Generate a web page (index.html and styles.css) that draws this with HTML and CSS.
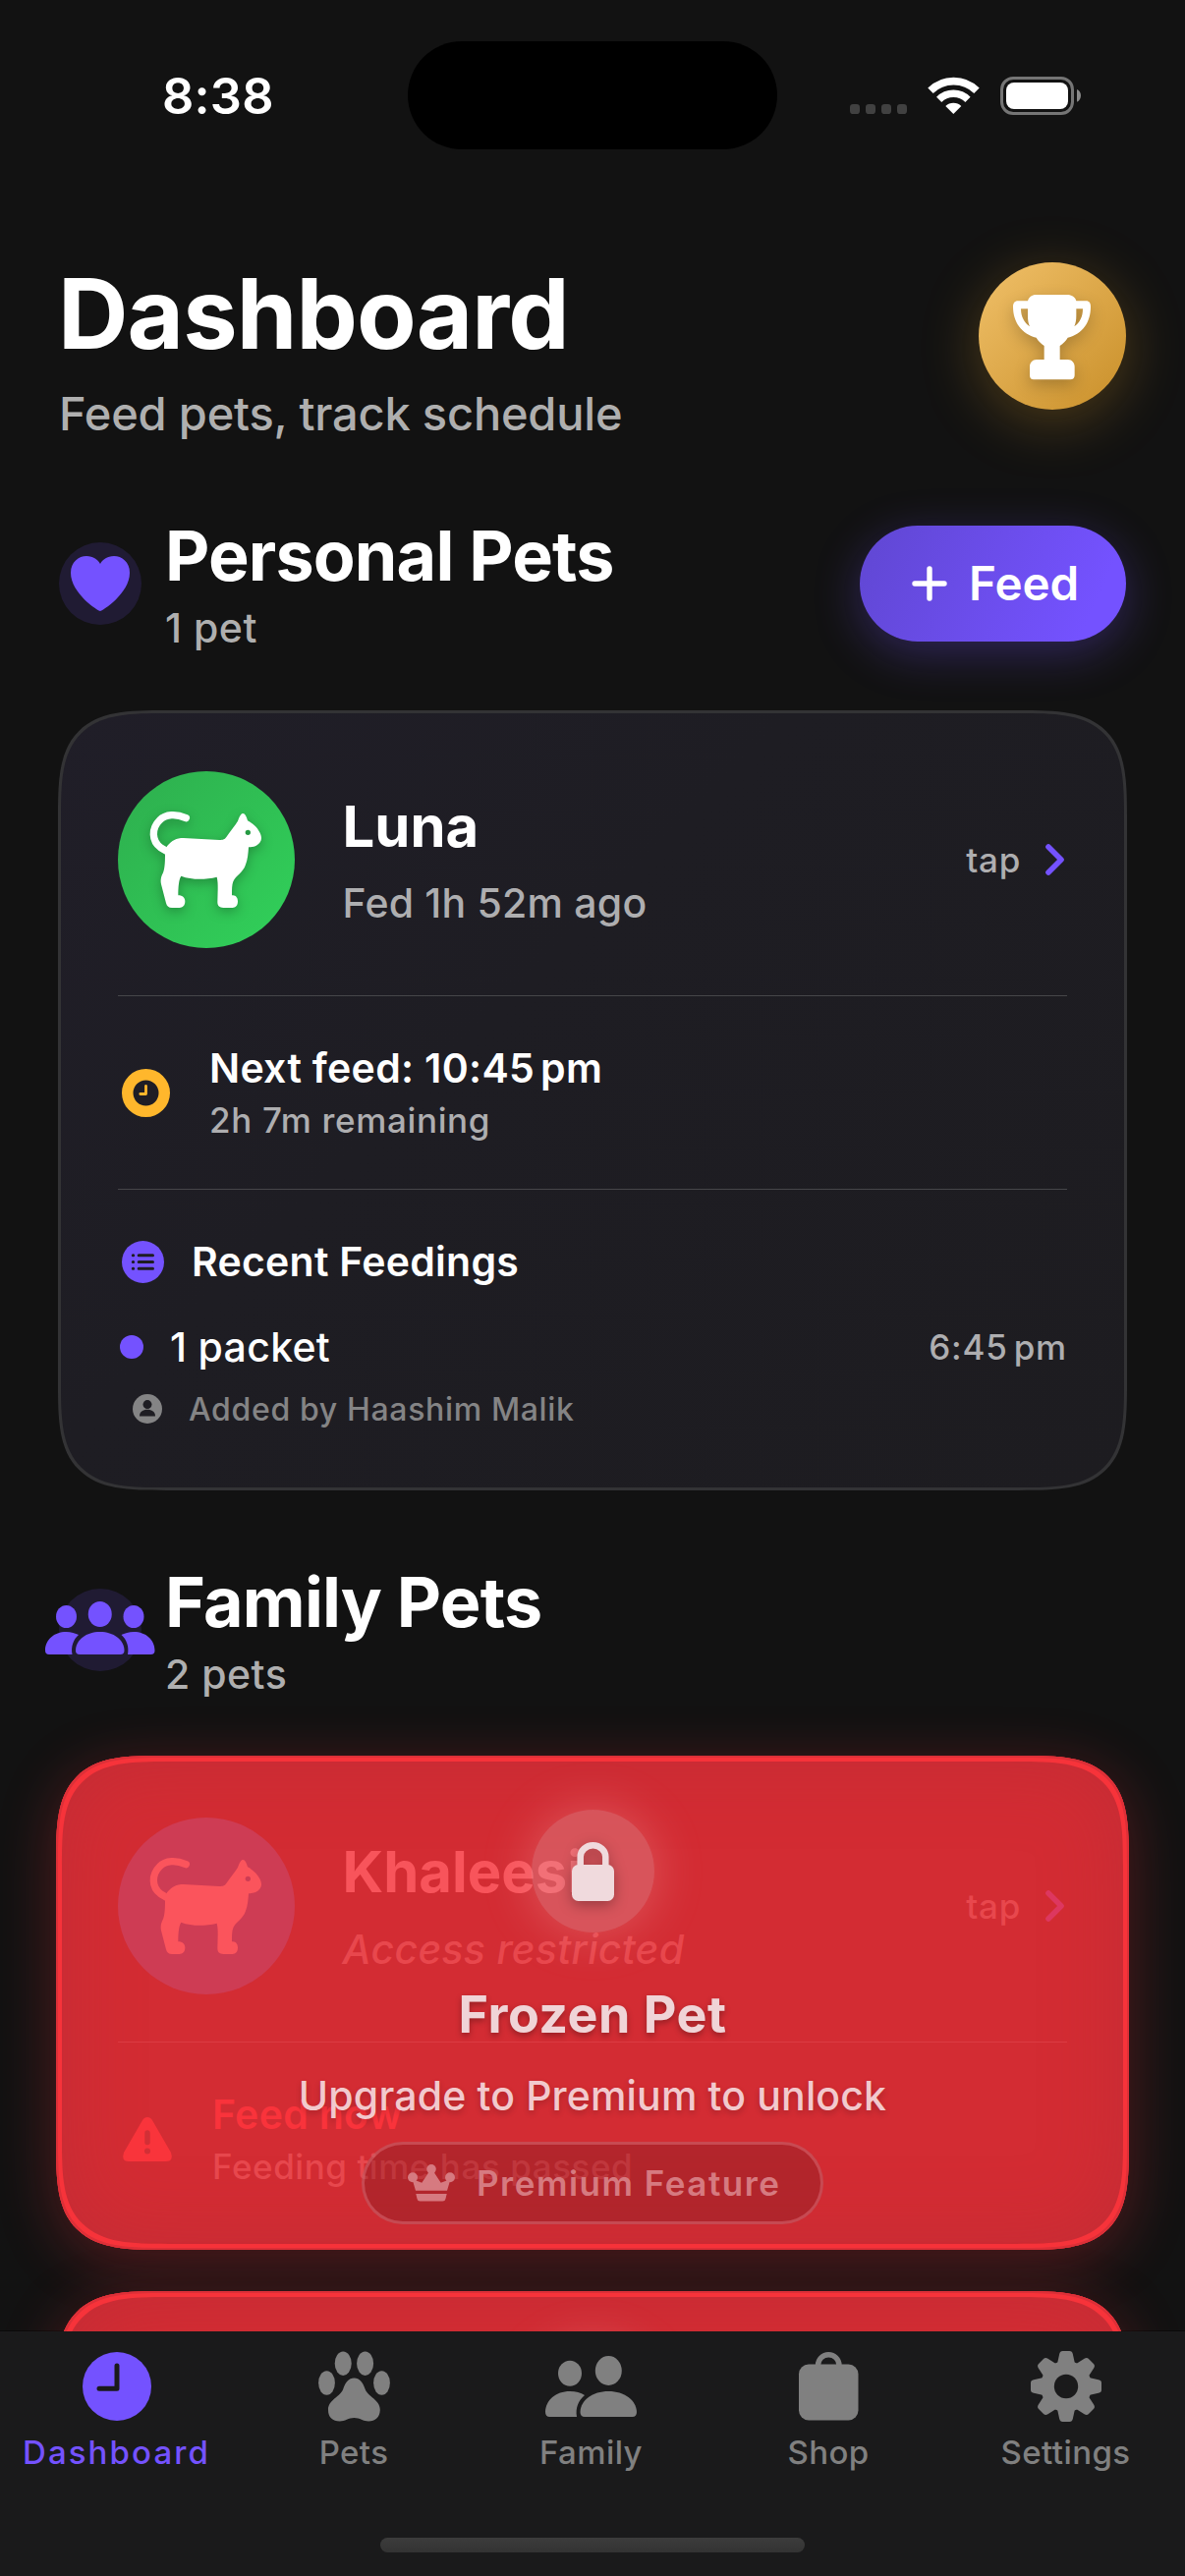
FILE: index.html
```html
<!DOCTYPE html>
<html lang="en">
<head>
<meta charset="utf-8">
<title>Dashboard</title>
<link rel="stylesheet" href="styles.css">
</head>
<body>
<svg class="defs" width="0" height="0" aria-hidden="true">
  <symbol id="cat" viewBox="-60 -75 540 540">
    <path d="M148 68C118 55 86 55 67 75C42 100 43 138 70 158L94 172" fill="none" stroke="currentColor" stroke-width="22" stroke-linecap="round"/>
    <path fill="currentColor" fill-rule="evenodd" d="M90 154C105 136 118 129 140 129L250 135C262 135 266 133 271 126C285 105 298 90 306 77C312 62 316 54 322 54C328 54 333 64 336 76C350 83 366 97 373 112C379 124 380 133 374 142C366 153 355 157 339 157C338 175 336 195 330 210C322 235 300 243 292 262C288 272 288 285 288 304C300 302 306 312 306 322C306 336 299 342 290 342L262 342C250 342 244 336 244 325L245 285C245 270 245 260 242 248C205 257 165 257 133 245C126 255 124 280 124 304C138 304 145 312 145 322C145 336 137 342 128 342L105 342C95 342 90 338 87 328L72 270C69 255 73 245 78 235C84 218 84 200 84 168ZM345 112A8 8 0 1 0 329 112A8 8 0 1 0 345 112Z"/>
  </symbol>
  <symbol id="chevron" viewBox="0 0 20 32">
    <path d="M3 3L16 16L3 29" fill="none" stroke="currentColor" stroke-width="5.6" stroke-linecap="round" stroke-linejoin="round"/>
  </symbol>
</svg>

<div class="phone">
  <header class="status">
    <span class="status-time">8:38</span>
    <span class="island"></span>
    <svg class="status-icons" viewBox="0 0 810 228">
      <g fill="#414141">
        <rect x="45" y="138" width="30" height="30" rx="10"/><rect x="93" y="138" width="30" height="30" rx="10"/>
        <rect x="141" y="138" width="30" height="30" rx="10"/><rect x="189" y="138" width="30" height="30" rx="10"/>
      </g>
      <g fill="none" stroke="#fff">
        <path d="M291 97A100 100 0 0 1 432 97" stroke-width="23"/>
        <path d="M317 124A62 62 0 0 1 405 124" stroke-width="22"/>
      </g>
      <path d="M361 168L337 144A35 35 0 0 1 385 144Z" fill="#fff"/>
      <rect x="508.500" y="58.500" width="216" height="108" rx="35" fill="none" stroke="#757575" stroke-width="9"/>
      <rect x="522" y="72" width="189" height="81" rx="24" fill="#fff"/>
      <path d="M738 93C754 99 754 125 738 131Z" fill="#8a8a8a"/>
    </svg>
  </header>

  <main class="content">
    <section class="page-head">
      <div class="page-titles">
        <h1>Dashboard</h1>
        <p class="page-sub">Feed pets, track schedule</p>
      </div>
      <div class="trophy">
        <svg viewBox="18 21 450 450"><path fill="#fff" fill-rule="evenodd" d="M194 120H288C302 120 314 128 316 139H346C356 139 360 146 360 156C360 205 335 240 290 251C284 262 276 268 266 276V318H290C303 318 311 328 311 340V366C311 374 306 379 298 379H186C178 379 174 374 174 366V340C174 328 182 318 195 318H218V276C208 268 200 262 194 251C150 240 123 205 123 156C123 146 128 139 138 139H168C171 128 180 120 194 120ZM147 163H168V185C168 197 170 208 174 217C157 205 147 188 147 163ZM316 163H336C336 188 327 205 310 217C314 208 316 197 316 185Z"/></svg>
      </div>
    </section>

    <section class="group-head personal">
      <span class="group-icon"><svg class="heart" viewBox="0 0 60 56"><path fill="currentColor" d="M30 56C28 56 0 38 0 17C0 6 8 0 16 0C23 0 28 4 30 8C32 4 37 0 44 0C52 0 60 6 60 17C60 38 32 56 30 56Z"/></svg></span>
      <div class="group-titles">
        <h2>Personal Pets</h2>
        <p>1 pet</p>
      </div>
      <div class="feed-btn">
        <svg viewBox="0 0 36 36"><path d="M18 3V33M3 18H33" fill="none" stroke="#fff" stroke-width="5.400" stroke-linecap="round"/></svg>
        <span>Feed</span>
      </div>
    </section>

    <article class="card pet-card">
      <div class="pet-head">
        <span class="avatar"><svg><use href="#cat"/></svg></span>
        <div class="pet-names"><h3>Luna</h3><p>Fed 1h 52m ago</p></div>
        <span class="tap">tap</span><svg class="chev"><use href="#chevron"/></svg>
      </div>
      <div class="next">
        <svg class="next-icon" viewBox="0 0 49 49"><path fill="#ffb72c" fill-rule="evenodd" d="M0 24.500A24.500 24.500 0 1 0 49 24.500A24.500 24.500 0 1 0 0 24.500ZM11.500 24.500A13 13 0 1 1 37.500 24.500A13 13 0 1 1 11.500 24.500Z"/><path d="M24.500 17.500V25.500H18.800" fill="none" stroke="#ffb72c" stroke-width="2.800" stroke-linecap="round" stroke-linejoin="round"/></svg>
        <div><p class="t-next">Next feed: 10:45<span class="thin"></span>pm</p><p class="t-remain">2h 7m remaining</p></div>
      </div>
      <div class="recent">
        <div class="recent-title">
          <svg viewBox="0 0 43 43"><circle cx="21.500" cy="21.500" r="21.500" fill="#7452ff"/><g stroke="#1e1d23" stroke-width="3" stroke-linecap="round"><path d="M11.300 14.800h.4M11.300 21.500h.4M11.300 28.200h.4M17.200 14.800H31.500M17.200 21.500H31.500M17.200 28.200H31.500"/></g></svg>
          <span>Recent Feedings</span>
        </div>
        <div class="entry"><span class="dot"></span><span>1 packet</span><span class="t-time">6:45<span class="thin"></span>pm</span></div>
        <div class="added">
          <svg viewBox="0 0 30 30"><circle cx="15" cy="15" r="15" fill="#848485"/><g fill="#1e1d23"><circle cx="15" cy="10.600" r="4.500"/><path d="M7 22.500C7 18 10.500 15.800 15 15.800S23 18 23 22.500Z"/></g></svg>
          <span>Added by Haashim Malik</span>
        </div>
      </div>
    </article>

    <section class="group-head family">
      <span class="group-icon"><svg class="people" viewBox="0 0 111.500 54"><g fill="currentColor"><ellipse cx="55.750" cy="13" rx="12" ry="13"/><ellipse cx="21.500" cy="15.500" rx="10.500" ry="11.500"/><ellipse cx="90" cy="15.500" rx="10.500" ry="11.500"/><path d="M35 54Q31 54 31 50C31 39 42 31 55.750 31C69.500 31 80.500 39 80.500 50Q80.500 54 76.500 54Z"/><path d="M4 54Q0 54 0 50C0 39 9 31 21.500 31C26 31 31 32.500 34 34C28.500 39 26 46 27.500 54Z"/><path d="M107.500 54Q111.500 54 111.500 50C111.500 39 102.500 31 90 31C85.500 31 80.500 32.500 77.500 34C83 39 85.500 46 84 54Z"/></g></svg></span>
      <div class="group-titles">
        <h2>Family Pets</h2>
        <p>2 pets</p>
      </div>
    </section>

    <article class="card frozen-card">
      <div class="pet-head">
        <span class="avatar"><svg><use href="#cat"/></svg></span>
        <div class="pet-names"><h3>Khaleesi</h3><p class="t-access">Access restricted</p></div>
        <span class="tap">tap</span><svg class="chev"><use href="#chevron"/></svg>
      </div>
      <div class="next">
        <svg class="warn" viewBox="0 0 50 45"><path fill="#f9343b" d="M25 0Q28.500 0 30.500 4L49 36Q52 45 44 45H6Q-2 45 1 36L19.500 4Q21.500 0 25 0Z"/><path d="M25 16V25.500" stroke="#d22f36" stroke-width="5.400" stroke-linecap="round"/><circle cx="25" cy="34.500" r="3" fill="#d22f36"/></svg>
        <div><p class="t-now">Feed now</p><p class="t-passed">Feeding time has passed</p></div>
      </div>
      <div class="freeze">
        <span class="lock"><svg viewBox="0 0 43 60"><path d="M8.700 28V15A12.800 11.700 0 0 1 34.300 15V28" fill="none" stroke="currentColor" stroke-width="6.500"/><rect y="23" width="43" height="37" rx="6.500" fill="currentColor"/></svg></span>
        <h3>Frozen Pet</h3>
        <p>Upgrade to Premium to unlock</p>
        <div class="pill">
          <svg viewBox="0 0 48 38"><g fill="currentColor"><circle cx="24" cy="4.800" r="4.800"/><circle cx="5" cy="13.200" r="5"/><circle cx="43" cy="13.200" r="5"/><path d="M4.500 15L14.300 18.800L22 7H26L33.700 18.800L43.500 15L40 26.800H8Z"/><path d="M8.300 30H39.700L38.500 35Q38 37.600 35.500 37.600H12.500Q10 37.600 9.500 35Z"/></g></svg>
          <span>Premium Feature</span>
        </div>
      </div>
    </article>

    <article class="card frozen-card next-card"><span class="lock-glow"></span></article>
  </main>

  <nav class="tabbar">
    <div class="tabs">
      <div class="tab active"><svg viewBox="0 0 70 70" width="70"><circle cx="35" cy="35" r="35" fill="currentColor"/><path d="M35 14V37.300H17" fill="none" stroke="#1a1a1b" stroke-width="5" stroke-linecap="round" stroke-linejoin="round"/></svg><span>Dashboard</span></div>
      <div class="tab"><svg viewBox="0 0 73 71" width="73"><g fill="currentColor"><ellipse cx="25.200" cy="12.200" rx="8.500" ry="12.200"/><ellipse cx="47.600" cy="12.200" rx="8.500" ry="12.200"/><ellipse cx="8.500" cy="32" rx="8.400" ry="12.200"/><ellipse cx="64.500" cy="32" rx="8.400" ry="12.200"/><path d="M36.400 27C42 27 45 31 47.500 38C50 46 63 49 62.800 59.500C62.500 67 58 71 51 71C46 71 42 67.500 36.400 67.500C30.800 67.500 27 71 21.800 71C14.500 71 10 67 10 59.500C9.800 49 22.800 46 25.300 38C27.800 31 30.800 27 36.400 27Z"/></g></svg><span>Pets</span></div>
      <div class="tab"><svg viewBox="0 0 93 62" width="93"><g fill="currentColor"><ellipse cx="25" cy="17.700" rx="12" ry="13"/><ellipse cx="64.300" cy="15" rx="13.500" ry="15"/><path d="M40 62Q35.500 62 35.500 57C36 45 48 36 64.300 36C80.500 36 92.500 45 93 57Q93 62 88.500 62Z"/><path d="M4.500 62Q0 62 0 57C.5 45 10.500 36 25 36C31 36 36 37.500 40 40C33.500 45.500 30.500 53 32 62Z"/></g></svg><span>Family</span></div>
      <div class="tab"><svg viewBox="0 0 61 70" width="61"><rect y="12.500" width="60.500" height="57" rx="10" fill="currentColor"/><path d="M19.500 16V13.500A10.700 10.700 0 0 1 41 13.500V16" fill="none" stroke="currentColor" stroke-width="5.400"/></svg><span>Shop</span></div>
      <div class="tab"><svg viewBox="-36 -36 72 72" width="72"><g fill="currentColor"><circle r="26"/><path id="tooth" d="M-9-23L-6.800-33Q-6.200-36-3.500-36H3.500Q6.200-36 6.800-33L9-23Z"/><use href="#tooth" transform="rotate(45)"/><use href="#tooth" transform="rotate(90)"/><use href="#tooth" transform="rotate(135)"/><use href="#tooth" transform="rotate(180)"/><use href="#tooth" transform="rotate(225)"/><use href="#tooth" transform="rotate(270)"/><use href="#tooth" transform="rotate(315)"/></g><circle r="12.200" fill="#1a1a1b"/></svg><span>Settings</span></div>
    </div>
    <span class="home-bar"></span>
  </nav>
</div>
</body>
</html>
```
FILE: styles.css
```css
* { box-sizing: border-box; margin: 0; padding: 0; }
body { background: #121212; font-family: Inter, "Liberation Sans", sans-serif; font-weight: 500; color: #fff; }
svg { display: block; flex: none; overflow: visible; }
.defs { position: absolute; }
h1, h2, h3 { font-weight: 700; }
h1, h2, h3, p, span { white-space: nowrap; }

.phone { width: 1206px; height: 2622px; display: flex; flex-direction: column; overflow: hidden; background: #121212; }

/* status bar */
.status { flex: none; height: 190px; display: flex; align-items: flex-start; }
.status-time { width: 415px; padding-left: 165px; margin-top: 68px; font-size: 50.5px; line-height: 60px; font-weight: 600; letter-spacing: .2px; }
.island { width: 376px; height: 110px; margin-top: 42px; border-radius: 55px; background: #000; }
.status-icons { width: 270px; height: 76px; margin: 60px 0 0 59px; }

.content { flex: 1; min-height: 0; overflow: hidden; padding: 69px 60px 0; }

/* page header */
.page-head { display: flex; justify-content: space-between; align-items: flex-start; height: 192px; }
.page-head h1 { font-size: 99px; line-height: 120px; margin-left: -1px; letter-spacing: -.9px; }
.page-sub { margin-top: 12px; font-size: 47px; line-height: 60px; letter-spacing: -.2px; color: #afafaf; }
.trophy { width: 150px; height: 150px; margin-top: 8px; border-radius: 50%; background: linear-gradient(135deg, #f0c069, #c98f29); box-shadow: 0 12px 60px rgba(255, 183, 44, .26); }
.trophy svg { width: 150px; height: 150px; filter: drop-shadow(0 6px 8px rgba(0, 0, 0, .22)); }

/* group headers */
.group-head { display: flex; align-items: center; height: 141px; }
.personal { margin-top: 72px; }
.family { margin-top: 71px; }
.group-icon { flex: none; width: 84px; height: 84px; border-radius: 50%; background: #201b33; color: #7452ff; display: flex; align-items: center; justify-content: center; }
.heart { width: 60px; height: 56px; }
.people { width: 111.5px; height: 54px; margin-bottom: 4px; }
.group-titles { flex: 1; margin-left: 24px; }
.group-titles h2 { margin-top: 1px; font-size: 70px; line-height: 84px; letter-spacing: -.85px; }
.group-titles p { margin-top: 6px; font-size: 41px; line-height: 50px; letter-spacing: .5px; color: #afafaf; }
.feed-btn { width: 271px; height: 118px; border-radius: 59px; display: flex; align-items: center; padding-left: 53px; gap: 22px; font-size: 47.5px; font-weight: 600; background: linear-gradient(115deg, #6047d2, #7452ff 85%); box-shadow: 0 12px 48px rgba(116, 82, 255, .3); }
.feed-btn svg { width: 36px; height: 36px; }

/* cards */
.card { border-radius: 74px; }
@supports (corner-shape: superellipse(1.7)) {
  .card { border-radius: 110px; corner-shape: superellipse(1.7); }
}
.pet-card { margin: 59px -1px 0; height: 794px; padding: 59px 58px; border: 3px solid #333335; background: linear-gradient(135deg, #201e28, #1e1d23 40%, #1d1c20); }
.pet-head { display: flex; align-items: center; height: 180px; }
.avatar { width: 180px; height: 180px; border-radius: 50%; background: linear-gradient(135deg, #2eae4e, #31d15a); color: #fff; }
.avatar svg { width: 180px; height: 180px; filter: drop-shadow(0 4px 6px rgba(0, 0, 0, .25)); }
.pet-names { flex: 1; margin-left: 48.5px; }
.pet-names h3 { font-size: 58px; line-height: 70px; }
.pet-names p { margin-top: 18px; font-size: 41px; line-height: 50px; letter-spacing: .2px; color: #aeaeb0; }
.tap { font-size: 35px; letter-spacing: .7px; color: #aeaeb0; }
.chev { width: 20px; height: 32px; margin: 0 2px 0 25px; color: #7452ff; }
.next { display: flex; align-items: center; margin-top: 48px; padding: 48px 0; border: solid #464649; border-width: 1px 0; height: 198px; }
.next-icon { width: 49px; height: 49px; margin: 0 40px 0 4px; }
.next p { line-height: 50px; }
.next .t-next { font-size: 41px; font-weight: 600; letter-spacing: .3px; }
.next .t-remain, .next .t-passed { font-size: 35px; line-height: 44px; margin-top: 6px; letter-spacing: .65px; color: #aeaeb0; }
.thin { display: inline-block; width: 6px; }
.recent-title { margin-top: 47px; display: flex; align-items: center; height: 52px; padding-left: 4px; gap: 28px; font-size: 41px; font-weight: 600; letter-spacing: .25px; }
.recent-title svg { width: 43px; height: 43px; }
.entry { margin-top: 36px; height: 50px; display: flex; align-items: center; padding-left: 2px; font-size: 41px; letter-spacing: .3px; }
.dot { width: 24px; height: 24px; border-radius: 50%; background: #7452ff; margin-right: 27px; }
.t-time { margin-left: auto; font-size: 35px; letter-spacing: .8px; color: #aeaeb0; }
.added { margin-top: 18px; height: 40px; display: flex; align-items: center; padding-left: 15px; gap: 27px; font-size: 32px; letter-spacing: .65px; color: #848485; }
.added svg { width: 30px; height: 30px; }

.frozen-card { position: relative; margin: 58px -3px 0; height: 503px; padding: 63px; background: #d32c33; box-shadow: 0 12px 60px rgba(255, 50, 60, .28), inset 0 0 0 2px #dc3038, inset 0 0 0 6px #f7333a, inset 0 0 80px rgba(180, 46, 56, .55); }
.next-card { margin-top: 42px; display: flex; justify-content: center; padding: 55px; }
.frozen-card .avatar { background: #ce3c54; color: #fb545c; }
.frozen-card .avatar svg { filter: none; }
.frozen-card h3 { color: #f8545b; }
.frozen-card .pet-names h3 { margin-top: -1px; }
.frozen-card .pet-names p { margin-top: 19px; }
.frozen-card p, .frozen-card .tap { color: #e8474d; }
.frozen-card .chev { color: #dd375f; }
.frozen-card .next { border-color: #db3b42 transparent transparent; }
.warn { width: 50px; height: 45px; margin: 0 41px 0 5px; }
.frozen-card .next .t-now { font-size: 41px; font-weight: 600; letter-spacing: .3px; color: #f9333b; }
.frozen-card .next .t-passed { letter-spacing: .55px; color: #e7474d; }
.frozen-card .t-access { font-style: italic; letter-spacing: .28px; }

/* locked overlay */
.freeze { position: absolute; inset: 0; display: flex; flex-direction: column; align-items: center; padding-top: 55px; }
.lock { width: 125px; height: 125px; border-radius: 50%; background: rgba(230, 180, 185, .3); box-shadow: 0 0 50px rgba(255, 200, 205, .28); display: flex; align-items: center; justify-content: center; color: #f0dadd; }
.lock svg { width: 43px; height: 60px; filter: drop-shadow(0 4px 7px rgba(0, 0, 0, .3)); }
.lock-glow { width: 125px; height: 125px; border-radius: 50%; box-shadow: 0 0 50px rgba(255, 200, 205, .28); }
.freeze h3 { margin-top: 52px; font-size: 52px; line-height: 64px; letter-spacing: .5px; color: #f0d4d7; text-shadow: 0 3px 6px rgba(0, 0, 0, .3); }
.frozen-card .freeze p { margin-top: 25px; font-size: 41px; line-height: 50px; letter-spacing: .15px; color: #f2c9cd; text-shadow: 0 3px 6px rgba(0, 0, 0, .2); }
.pill { margin-top: 22px; width: 470px; height: 84px; border-radius: 42px; border: 3px solid rgba(230, 130, 140, .4); background: rgba(120, 25, 32, .35); display: flex; align-items: center; padding-left: 44px; gap: 22px; font-size: 35px; font-weight: 600; letter-spacing: 1.5px; color: #d67a80; }
.pill svg { width: 48px; height: 38px; }

/* tab bar */
.tabbar { flex: none; height: 249px; background: #1a1a1b; box-shadow: 0 -1px 0 rgba(0, 0, 0, .4); display: flex; flex-direction: column; align-items: center; }
.tabs { width: 1207.5px; margin-left: -3px; display: grid; grid-template-columns: repeat(5, 1fr); }
.tab { display: flex; flex-direction: column; align-items: center; color: #808080; font-size: 33px; letter-spacing: .4px; }
.tab svg { height: 112px; }
.tab span { line-height: 40px; margin-top: -9px; }
.tab.active { color: #7452ff; letter-spacing: 2.1px; }
.home-bar { width: 432px; height: 15px; margin-top: 67px; border-radius: 8px; background: linear-gradient(#3c3c3c, #333); }
```
